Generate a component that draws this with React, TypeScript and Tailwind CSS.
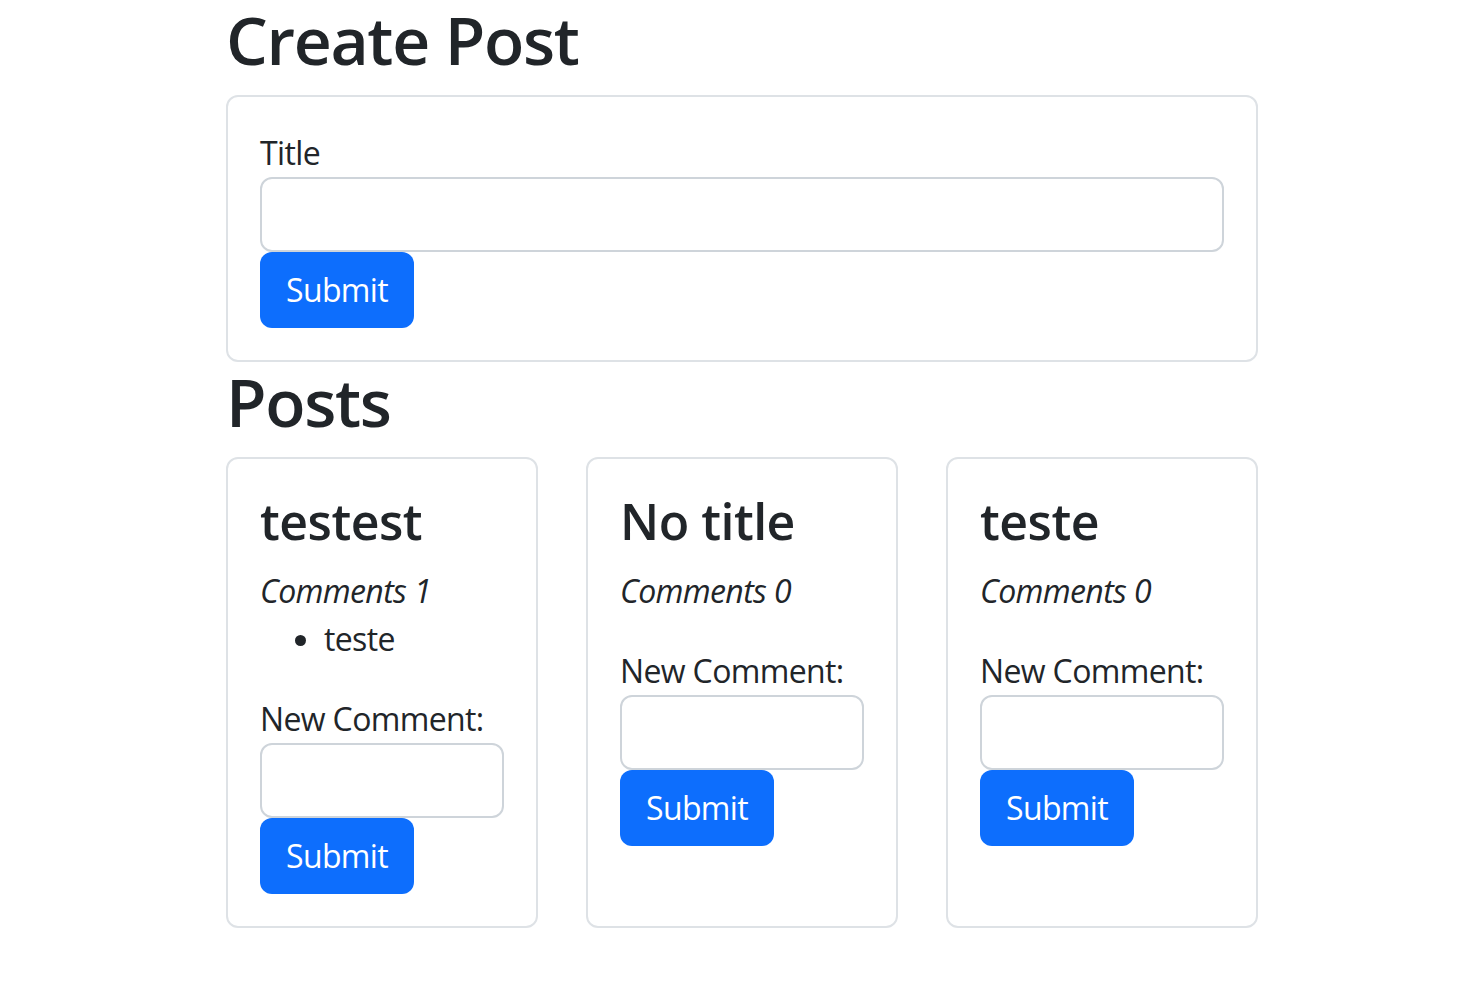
import { useState } from "react";

interface Post {
  id: number;
  title: string;
  comments: string[];
}

const posts: Post[] = [
  { id: 1, title: "testest", comments: ["teste"] },
  { id: 2, title: "No title", comments: [] },
  { id: 3, title: "teste", comments: [] },
];

function SubmitButton() {
  return (
    <button
      type="submit"
      className="h-[76px] w-[154px] self-start rounded-[12px] bg-[#0d6efd] text-[32px] leading-[48px] text-white"
    >
      Submit
    </button>
  );
}

function PostCard({ post }: { post: Post }) {
  const [comment, setComment] = useState("");

  return (
    <div className="flex flex-col rounded-[12px] border-2 border-[#dee2e6] p-8">
      <h3 className="mb-4 text-[50px] font-semibold leading-[60px] tracking-[-0.01em]">{post.title}</h3>
      <em className="block">Comments {post.comments.length}</em>
      <ul className="mb-8 list-disc pl-16">
        {post.comments.map((c, i) => (
          <li key={i}>{c}</li>
        ))}
      </ul>
      <form className="flex flex-col" onSubmit={(e) => e.preventDefault()}>
        <label className="block">New Comment:</label>
        <input
          type="text"
          value={comment}
          onChange={(e) => setComment(e.target.value)}
          className="h-[75px] w-full rounded-[12px] border-2 border-[#ced4da] px-6 outline-none"
        />
        <SubmitButton />
      </form>
    </div>
  );
}

export default function App() {
  const [title, setTitle] = useState("");

  return (
    <div className="min-h-screen bg-white font-['Open_Sans',sans-serif] text-[32px] leading-[48px] tracking-[-0.02em] text-[#212529]">
      <div className="mx-auto w-[1080px] px-6">
        <h1 className="mb-4 text-[66px] font-semibold leading-[79px] tracking-[-0.02em]">Create Post</h1>

        {/* Create post form */}
        <div className="rounded-[12px] border-2 border-[#dee2e6] p-8">
          <form className="flex flex-col" onSubmit={(e) => e.preventDefault()}>
            <label className="block">Title</label>
            <input
              type="text"
              value={title}
              onChange={(e) => setTitle(e.target.value)}
              className="h-[75px] w-full rounded-[12px] border-2 border-[#ced4da] px-6 outline-none"
            />
            <SubmitButton />
          </form>
        </div>

        <h1 className="mb-4 text-[66px] font-semibold leading-[79px] tracking-[-0.02em]">Posts</h1>

        {/* Post list */}
        <div className="grid grid-cols-3 gap-12">
          {posts.map((post) => (
            <PostCard key={post.id} post={post} />
          ))}
        </div>
      </div>
    </div>
  );
}
